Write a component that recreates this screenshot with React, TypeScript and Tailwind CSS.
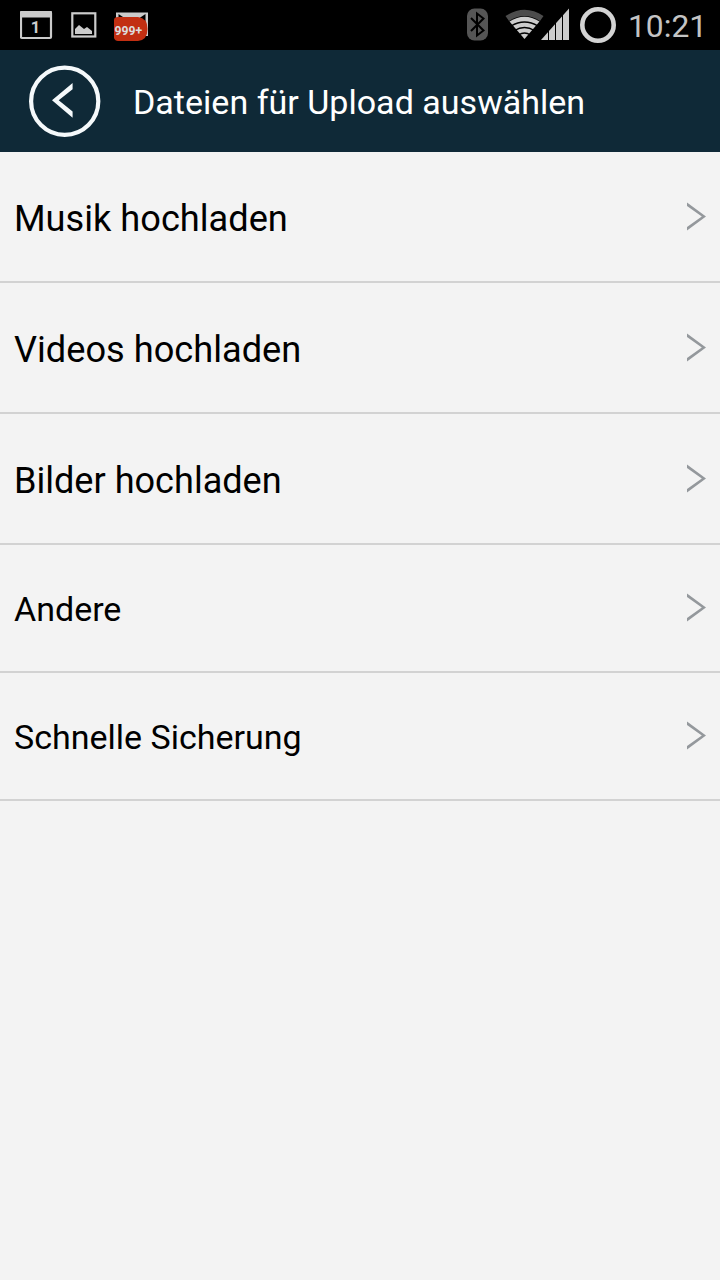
import React from "react";

interface UploadOption {
  label: string;
  rowClass: string;
  textClass: string;
}

const options: UploadOption[] = [
  { label: "Musik hochladen", rowClass: "h-[131px]", textClass: "pt-[5px] text-[36.2px]" },
  { label: "Videos hochladen", rowClass: "h-[131px]", textClass: "pt-[5px] text-[36.2px]" },
  { label: "Bilder hochladen", rowClass: "h-[131px]", textClass: "pt-[5px] text-[36.1px]" },
  { label: "Andere", rowClass: "h-[128px]", textClass: "pt-[2px] text-[34px]" },
  { label: "Schnelle Sicherung", rowClass: "h-[128px]", textClass: "pt-[2px] text-[34px]" },
];

const StatusBar: React.FC = () => {
  return (
    <div className="flex h-[50px] items-center bg-black pl-5 pr-[12px]">
      <svg width="132" height="50" viewBox="20 0 132 50">
        {/* calendar */}
        <rect x="21" y="12" width="30" height="26" rx="1" fill="none" stroke="#cbcbcb" strokeWidth="2.2" />
        <path d="M20 12q0-1 1-1h30q1 0 1 1v5.500H20z" fill="#cbcbcb" />
        <text x="35.500" y="33" textAnchor="middle" fontSize="16.500" fontWeight="700" fill="#cbcbcb">1</text>
        {/* picture */}
        <rect x="72.300" y="13.300" width="23" height="23.200" fill="none" stroke="#cbcbcb" strokeWidth="2.200" />
        <path d="M75 34v-5l4-4 5 4 3-2 5 4v3z" fill="#cbcbcb" />
        {/* mail with counter */}
        <path d="M116 12.500h32V36h-32z" fill="#cbcbcb" />
        <path d="M118.500 14l6 4v4h-6zM145.500 14l-6 4v5h6z" fill="#000" />
        <path d="M114 20q0-3 4-3h20q9.500 1 9.500 12t-9.500 12h-20q-3 0-4-3z" fill="#c22f12" />
        <text x="114.500" y="34.800" fontSize="12.200" fontWeight="700" fill="#ddd">999+</text>
      </svg>
      <svg className="ml-auto" width="152" height="50" viewBox="465 0 152 50">
        {/* bluetooth */}
        <rect x="467" y="8.500" width="21" height="32" rx="7.500" fill="#555" />
        <path d="M471 18l12.500 12.500-6.500 5V13.500l6.500 5L471 31" fill="none" stroke="#000" strokeWidth="2" />
        {/* wifi */}
        <path d="M505.500 16Q524.500 3.500 543.500 16l-3.500 5Q524.500 11 509 21z" fill="#4c4c4c" />
        <path d="M509.500 21.500Q524.500 12 539.500 21.500L524.500 39z" fill="#ccc" />
        <path d="M511 26q13.500-8 27 0M514.500 30.500q10-6 20 0M518.500 35q6-4 12 0" fill="none" stroke="#000" strokeWidth="1.400" />
        {/* signal */}
        <path d="M541 40L569 8.500V40z" fill="#ccc" />
        <path d="M548.500 28v12M555.500 20v20M562.500 12v28" stroke="#000" strokeWidth="1" />
        {/* battery */}
        <circle cx="598" cy="25" r="15.700" fill="none" stroke="#d3d3d3" strokeWidth="4.600" />
      </svg>
      <span className="ml-[11px] w-[80px] pt-[3px] text-[31.8px] leading-none text-[#c4c4c4]">10:21</span>
    </div>
  );
};

const App: React.FC = () => {
  return (
    <main className="min-h-screen w-[720px] bg-[#f3f3f3] font-['Roboto',sans-serif] text-black">
      <StatusBar />
      <header className="flex h-[102px] items-center bg-[#0f2937] pl-[28px]">
        <svg width="74" height="74" viewBox="28 64 74 74">
          <circle cx="64.700" cy="101.300" r="33.600" fill="none" stroke="#f5f9fb" strokeWidth="4.200" />
          <path d="M72.600 83v6.200L58.700 100.300l13.900 11.200v6.300L52 100.300z" fill="#f5f9fb" />
        </svg>
        <h1 className="ml-[31px] pt-[3px] text-[34.05px] text-white">Dateien für Upload auswählen</h1>
      </header>
      <ul>
        {options.map((option) => (
          <li
            key={option.label}
            className={`flex items-center justify-between border-b-2 border-[#d2d2d2] pl-[14px] pr-[13px] ${option.rowClass}`}
          >
            <span className={option.textClass}>{option.label}</span>
            <svg width="22" height="30" viewBox="0 0 22 30">
              <path d="M2 .5v3.500L16.800 14.500 2 25v3.500l19-14z" fill="#94989c" />
            </svg>
          </li>
        ))}
      </ul>
    </main>
  );
};

export default App;
